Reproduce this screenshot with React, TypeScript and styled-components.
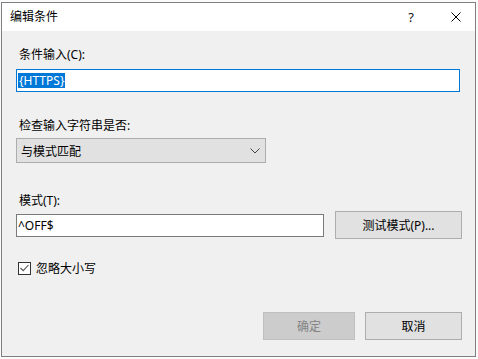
import styled, { createGlobalStyle } from "styled-components";

const GlobalStyle = createGlobalStyle`
  html, body {
    margin: 0;
    padding: 0;
    background: #fbfbfb;
  }
  body {
    font-family: "Noto Sans", "Noto Sans CJK SC", sans-serif;
    font-size: 12px;
    color: #000;
  }
`;

const Window = styled.div`
  box-sizing: border-box;
  margin: 2px 0 0 1px;
  width: 475px;
  height: 355px;
  border: 1px solid #7f7f7f;
  background: #f0f0f0;
  display: flex;
  flex-direction: column;
`;

const TitleBar = styled.div`
  height: 28px;
  background: #fff;
  display: flex;
  align-items: center;
  padding-left: 8px;
`;

const Title = styled.span`
  flex: 1;
  font-size: 12px;
  line-height: 16px;
`;

const TitleButton = styled.span<{ $w: number }>`
  width: ${(p) => p.$w}px;
  display: flex;
  justify-content: center;
  align-items: center;
  font-size: 13px;
  color: #111;
`;

const Body = styled.div`
  flex: 1;
  display: flex;
  flex-direction: column;
  padding: 16px 13px 0 14px;
`;

const Label = styled.div<{ $top: number }>`
  margin-top: ${(p) => p.$top}px;
  padding-left: 3px;
  line-height: 16px;
  height: 16px;
`;

const TextBox = styled.div<{ $w: number; $focus?: boolean }>`
  box-sizing: border-box;
  width: ${(p) => p.$w}px;
  height: 23px;
  margin-top: ${(p) => (p.$focus ? 6 : 0)}px;
  background: #fff;
  border: 1px solid ${(p) => (p.$focus ? "#0078d7" : "#7a7a7a")};
  display: flex;
  align-items: center;
  padding-left: 1px;
  font-size: 12px;
`;

const Selected = styled.span`
  background: #0078d7;
  color: #fff;
  line-height: 15px;
  padding: 0 1px;
`;

const Select = styled.div`
  box-sizing: border-box;
  margin-top: 4px;
  width: 250px;
  height: 25px;
  background: #e1e1e1;
  border: 1px solid #adadad;
  display: flex;
  align-items: center;
  justify-content: space-between;
  padding: 0 5px 0 4px;
`;

const PatternRow = styled.div`
  margin-top: 2px;
  display: flex;
  align-items: center;
  justify-content: space-between;
  height: 28px;
`;

const Button = styled.div<{ $w: number; $disabled?: boolean }>`
  box-sizing: border-box;
  width: ${(p) => p.$w}px;
  height: 28px;
  display: flex;
  align-items: center;
  justify-content: center;
  background: ${(p) => (p.$disabled ? "#cccccc" : "#e1e1e1")};
  border: 1px solid ${(p) => (p.$disabled ? "#bfbfbf" : "#adadad")};
  color: ${(p) => (p.$disabled ? "#838383" : "#000")};
`;

const CheckRow = styled.div`
  margin-top: 21px;
  display: flex;
  align-items: center;
  gap: 5px;
  padding-left: 2px;
  height: 16px;
`;

const CheckBox = styled.span`
  box-sizing: border-box;
  width: 13px;
  height: 13px;
  border: 1px solid #333;
  background: #fff;
  display: flex;
  align-items: center;
  justify-content: center;
`;

const Footer = styled.div`
  margin-top: auto;
  margin-bottom: 16px;
  display: flex;
  justify-content: flex-end;
  gap: 10px;
`;

export default function App() {
  return (
    <>
      <GlobalStyle />
      <Window>
        <TitleBar>
          <Title>编辑条件</Title>
          <TitleButton $w={52}>?</TitleButton>
          <TitleButton $w={38}>
            <svg width="10" height="10" viewBox="0 0 10 10">
              <path d="M0.5 0.5 L9.5 9.5 M9.5 0.5 L0.5 9.5" stroke="#000" strokeWidth="1" />
            </svg>
          </TitleButton>
        </TitleBar>
        <Body>
          <Label $top={0}>条件输入(C):</Label>
          <TextBox $w={444} $focus>
            <Selected>{"{HTTPS}"}</Selected>
          </TextBox>
          <Label $top={26}>检查输入字符串是否:</Label>
          <Select>
            <span>与模式匹配</span>
            <svg width="10" height="6" viewBox="0 0 10 6">
              <path d="M0.5 0.5 L5 5 L9.5 0.5" stroke="#444" strokeWidth="1" fill="none" />
            </svg>
          </Select>
          <Label $top={30}>模式(T):</Label>
          <PatternRow>
            <TextBox $w={308}>^OFF$</TextBox>
            <Button $w={127}>测试模式(P)...</Button>
          </PatternRow>
          <CheckRow>
            <CheckBox>
              <svg width="9" height="8" viewBox="0 0 9 8">
                <path d="M0.5 4 L3.2 6.7 L8.5 1" stroke="#555" strokeWidth="1.1" fill="none" />
              </svg>
            </CheckBox>
            <span>忽略大小写</span>
          </CheckRow>
          <Footer>
            <Button $w={92} $disabled>确定</Button>
            <Button $w={97}>取消</Button>
          </Footer>
        </Body>
      </Window>
    </>
  );
}
